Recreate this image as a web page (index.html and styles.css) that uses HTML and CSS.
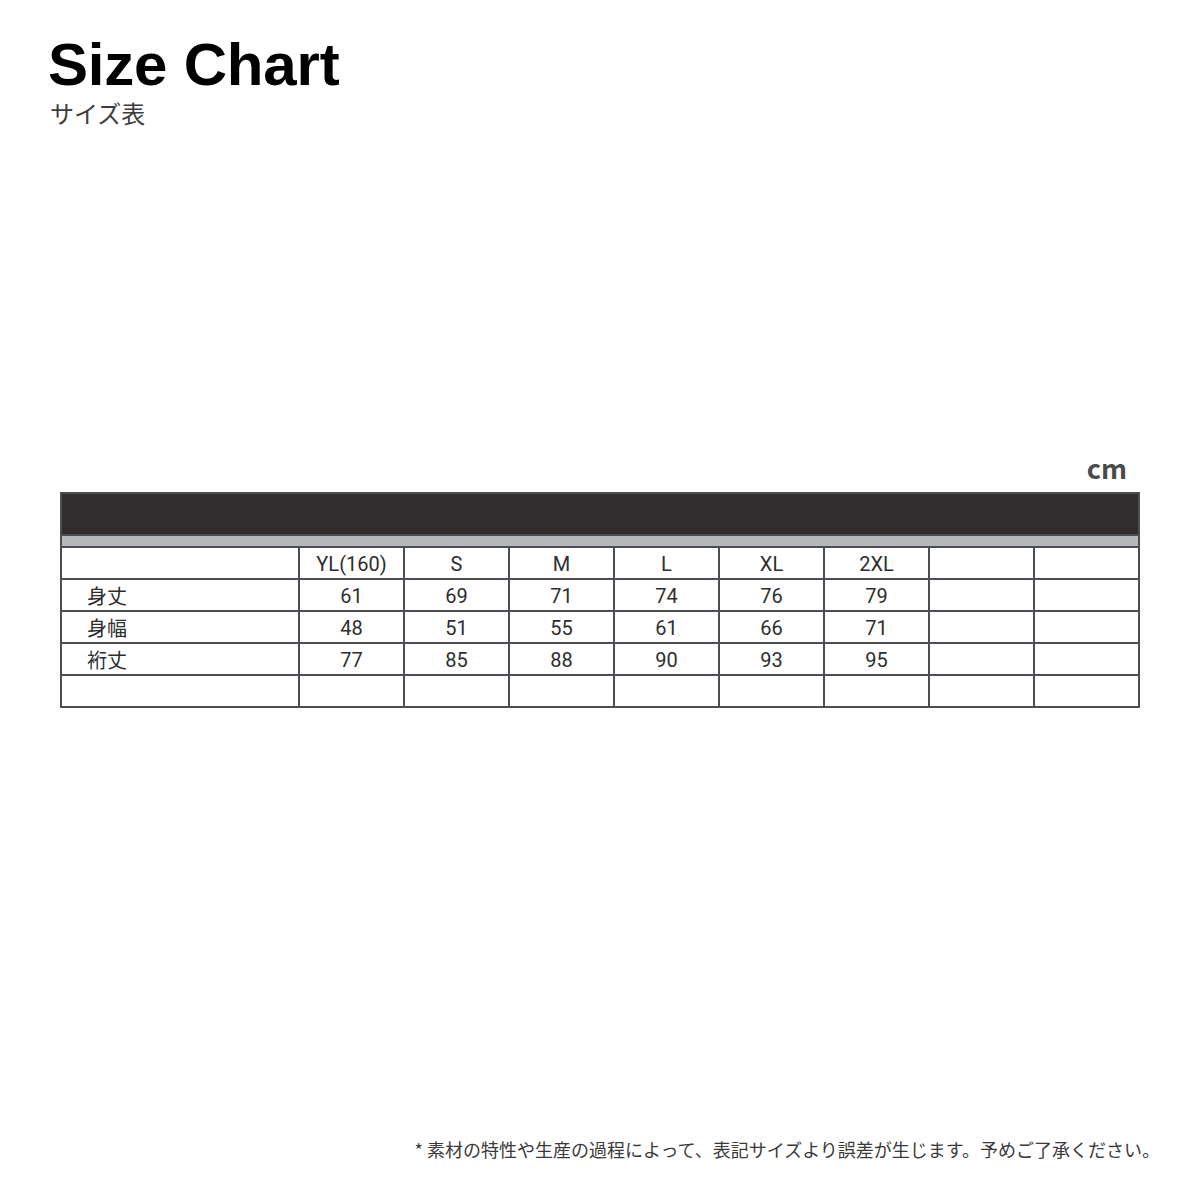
FILE: index.html
```html
<!DOCTYPE html>
<html lang="ja">
<head>
<meta charset="utf-8">
<title>Size Chart</title>
<link rel="stylesheet" href="styles.css">
</head>
<body>
<div class="page">
  <header class="title-block">
    <h1 class="title">Size Chart</h1>
    <p class="subtitle">サイズ表</p>
  </header>
  <section class="chart">
    <div class="unit">cm</div>
    <table class="size-table">
      <colgroup>
        <col class="col-label">
        <col class="col-size"><col class="col-size"><col class="col-size"><col class="col-size">
        <col class="col-size"><col class="col-size"><col class="col-size"><col class="col-size">
      </colgroup>
      <tr class="row-dark"><td colspan="9"></td></tr>
      <tr class="row-gray"><td colspan="9"></td></tr>
      <tr class="row-data">
        <td class="label"></td><td>YL(160)</td><td>S</td><td>M</td><td>L</td><td>XL</td><td>2XL</td><td></td><td></td>
      </tr>
      <tr class="row-data">
        <td class="label">身丈</td><td>61</td><td>69</td><td>71</td><td>74</td><td>76</td><td>79</td><td></td><td></td>
      </tr>
      <tr class="row-data">
        <td class="label">身幅</td><td>48</td><td>51</td><td>55</td><td>61</td><td>66</td><td>71</td><td></td><td></td>
      </tr>
      <tr class="row-data">
        <td class="label">裄丈</td><td>77</td><td>85</td><td>88</td><td>90</td><td>93</td><td>95</td><td></td><td></td>
      </tr>
      <tr class="row-data">
        <td class="label"></td><td></td><td></td><td></td><td></td><td></td><td></td><td></td><td></td>
      </tr>
    </table>
  </section>
  <footer class="note">* 素材の特性や生産の過程によって、表記サイズより誤差が生じます。予めご了承ください。</footer>
</div>
</body>
</html>
```
FILE: styles.css
```css
html, body {
  margin: 0;
  padding: 0;
  background: #ffffff;
}

.page {
  width: 1200px;
  height: 1200px;
  display: flex;
  flex-direction: column;
  box-sizing: border-box;
}

.title-block {
  padding: 36px 0 0 48px;
}

.title {
  margin: 0;
  font-family: "Liberation Sans", Arial, sans-serif;
  font-weight: 700;
  font-size: 60px;
  line-height: 58px;
  color: #000000;
  letter-spacing: -0.2px;
}

.subtitle {
  margin: 7px 0 0 2px;
  font-family: "Noto Sans CJK JP", sans-serif;
  font-size: 24px;
  line-height: 24px;
  color: #3d3d3d;
}

.chart {
  margin-top: 329px;
  padding: 0 60px;
}

.unit {
  text-align: right;
  padding-right: 13px;
  font-family: "Noto Sans CJK JP", sans-serif;
  font-weight: 700;
  font-size: 27px;
  line-height: 28px;
  color: #4a4a4a;
  margin-bottom: 10px;
}

.size-table {
  width: 1080px;
  table-layout: fixed;
  border-collapse: collapse;
  font-family: Roboto, "Noto Sans CJK JP", sans-serif;
  font-weight: 400;
  font-size: 20px;
  color: #2e2e2e;
}

.col-label {
  width: 238px;
}

.col-size {
  width: 105px;
}

.size-table td {
  border: 2px solid #4b4f54;
  padding: 0;
  text-align: center;
  vertical-align: middle;
  line-height: 20px;
}

.row-dark td {
  height: 40px;
  background: #312d2f;
}

.row-gray td {
  height: 10px;
  background: #b7b8bb;
}

.row-data td {
  height: 28px;
  padding-top: 2px;
}

.size-table td.label {
  text-align: left;
  padding-left: 25px;
  font-family: "Noto Sans CJK JP", sans-serif;
}

.note {
  margin-top: auto;
  margin-bottom: 40px;
  padding-right: 40px;
  text-align: right;
  font-family: "Noto Sans CJK JP", sans-serif;
  font-size: 18px;
  line-height: 22px;
  color: #3a3a3a;
}
```
